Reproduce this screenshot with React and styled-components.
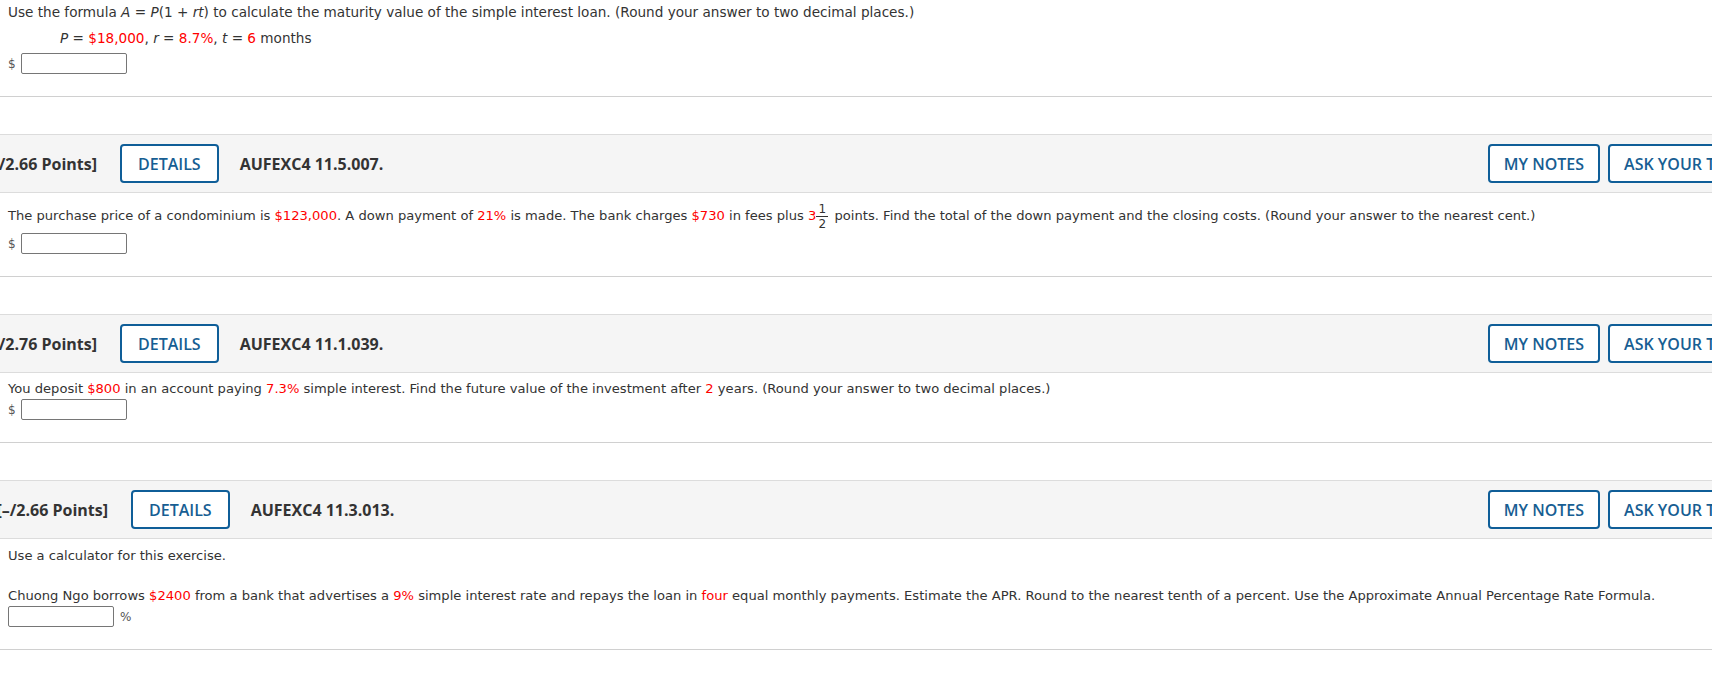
import styled, { createGlobalStyle } from "styled-components";

const GlobalStyle = createGlobalStyle`
	html, body {
		margin: 0;
		padding: 0;
		overflow: hidden;
		background: #fff;
	}
`;

const questions = [
	{
		points: "[–/2.66 Points]",
		pointsWidth: 97,
		code: "AUFEXC4 11.5.007.",
	},
	{
		points: "[–/2.76 Points]",
		pointsWidth: 97,
		code: "AUFEXC4 11.1.039.",
	},
	{
		points: "[–/2.66 Points]",
		pointsWidth: 108,
		code: "AUFEXC4 11.3.013.",
	},
];

const Red = ({ children }) => <Value>{children}</Value>;

const Fraction = ({ top, bottom }) => (
	<Frac>
		<FracPart>{top}</FracPart>
		<FracPart $line>{bottom}</FracPart>
	</Frac>
);

const AnswerBox = ({ prefix, suffix, width, gap }) => (
	<AnswerRow $gap={gap}>
		{prefix && <Unit>{prefix}</Unit>}
		<Input type="text" $width={width} />
		{suffix && <Unit $after>{suffix}</Unit>}
	</AnswerRow>
);

const Header = ({ q }) => (
	<Band>
		<Points $width={q.pointsWidth}>
			<span>{q.points}</span>
		</Points>
		<OutlineButton>DETAILS</OutlineButton>
		<Code>{q.code}</Code>
		<RightGroup>
			<OutlineButton $wide>MY NOTES</OutlineButton>
			<OutlineButton $wide>ASK YOUR TEACHER</OutlineButton>
		</RightGroup>
	</Band>
);

const App = () => {
	return (
		<Page>
			<GlobalStyle />
			<Body $top={3} $size={13.6}>
				<Line>
					Use the formula <i>A</i> = <i>P</i>(1 + <i>rt</i>) to calculate the maturity value of the simple
					interest loan. (Round your answer to two decimal places.)
				</Line>
				<Line $indent={52} $gap={8}>
					<i>P</i> = <Red>$18,000</Red>, <i>r</i> = <Red>8.7%</Red>, <i>t</i> = <Red>6</Red> months
				</Line>
				<AnswerBox prefix="$" gap={6} />
			</Body>
			<Divider />

			<Question>
				<Header q={questions[0]} />
				<Body $top={9}>
					<Line>
						The purchase price of a condominium is <Red>$123,000</Red>. A down payment of <Red>21%</Red> is
						made. The bank charges <Red>$730</Red> in fees plus <Red>3</Red>
						<Fraction top="1" bottom="2" /> points. Find the total of the down payment and the closing costs.
						(Round your answer to the nearest cent.)
					</Line>
					<AnswerBox prefix="$" gap={2} />
				</Body>
				<Divider />
			</Question>

			<Question>
				<Header q={questions[1]} />
				<Body $top={7}>
					<Line>
						You deposit <Red>$800</Red> in an account paying <Red>7.3%</Red> simple interest. Find the future
						value of the investment after <Red>2</Red> years. (Round your answer to two decimal places.)
					</Line>
					<AnswerBox prefix="$" />
				</Body>
				<Divider />
			</Question>

			<Question>
				<Header q={questions[2]} />
				<Body $top={8}>
					<Line>Use a calculator for this exercise.</Line>
					<Line $gap={22}>
						Chuong Ngo borrows <Red>$2400</Red> from a bank that advertises a <Red>9%</Red> simple interest
						rate and repays the loan in <Red>four</Red> equal monthly payments. Estimate the APR. Round to the
						nearest tenth of a percent. Use the Approximate Annual Percentage Rate Formula.
					</Line>
					<AnswerBox suffix="%" />
				</Body>
				<Divider />
			</Question>
		</Page>
	);
};

export default App;

const Page = styled.div`
	width: 1800px;
	font-family: "DejaVu Sans", Verdana, sans-serif;
	font-size: 13.1px;
	color: #333;
`;

const Body = styled.div`
	padding: ${(p) => p.$top}px 8px 22px 8px;
	font-size: ${(p) => (p.$size ? `${p.$size}px` : "inherit")};
`;

const Line = styled.div`
	line-height: 18px;
	margin-top: ${(p) => p.$gap || 0}px;
	margin-left: ${(p) => p.$indent || 0}px;
	white-space: nowrap;

	i {
		font-style: italic;
	}
`;

const Value = styled.span`
	color: #f00;
`;

const Frac = styled.span`
	display: inline-flex;
	flex-direction: column;
	align-items: center;
	vertical-align: middle;
	font-size: 12px;
	line-height: 14px;
	margin: 0 2px 0 0;
`;

const FracPart = styled.span`
	display: block;
	padding: 0 1px;
	min-width: 10px;
	text-align: center;
	border-top: ${(p) => (p.$line ? "1px solid #333" : "none")};
`;

const AnswerRow = styled.div`
	display: flex;
	align-items: center;
	margin-top: ${(p) => (p.$gap != null ? p.$gap : 1)}px;
	font-size: 13px;
`;

const Unit = styled.span`
	width: ${(p) => (p.$after ? "auto" : "13px")};
	margin-left: ${(p) => (p.$after ? "6px" : "0")};
	color: #555;
	font-size: 12px;
`;

const Input = styled.input`
	box-sizing: border-box;
	width: ${(p) => p.$width || 106}px;
	height: 21px;
	border: 1px solid #767676;
	border-radius: 2px;
	background: #fff;
	padding: 1px 4px;
	margin: 0;
	font: inherit;
`;

const Divider = styled.div`
	height: 1px;
	background: #d0d0d0;
`;

const Question = styled.section`
	margin-top: 37px;
`;

const Band = styled.div`
	display: flex;
	align-items: center;
	height: 57px;
	background: #f5f5f5;
	border-top: 1px solid #dcdcdc;
	border-bottom: 1px solid #dcdcdc;
	padding-right: 8px;
	font-family: "Open Sans", "Noto Sans", sans-serif;
	font-size: 16px;
	color: #333;
`;

const Points = styled.div`
	display: flex;
	justify-content: flex-end;
	width: ${(p) => p.$width}px;
	overflow: hidden;
	white-space: nowrap;
	font-weight: 700;
	margin-right: 23px;
`;

const OutlineButton = styled.button`
	box-sizing: border-box;
	height: 39px;
	padding: 0 ${(p) => (p.$wide ? "14px" : "16px")};
	background: #fff;
	border: 2px solid #0f5e98;
	border-radius: 4px;
	color: #175e93;
	font-family: "Open Sans", "Noto Sans", sans-serif;
	font-size: 16px;
	font-weight: 600;
	white-space: nowrap;
	cursor: pointer;
`;

const Code = styled.span`
	margin-left: 21px;
	font-weight: 700;
	white-space: nowrap;
`;

const RightGroup = styled.div`
	display: flex;
	gap: 8px;
	margin-left: auto;
`;
